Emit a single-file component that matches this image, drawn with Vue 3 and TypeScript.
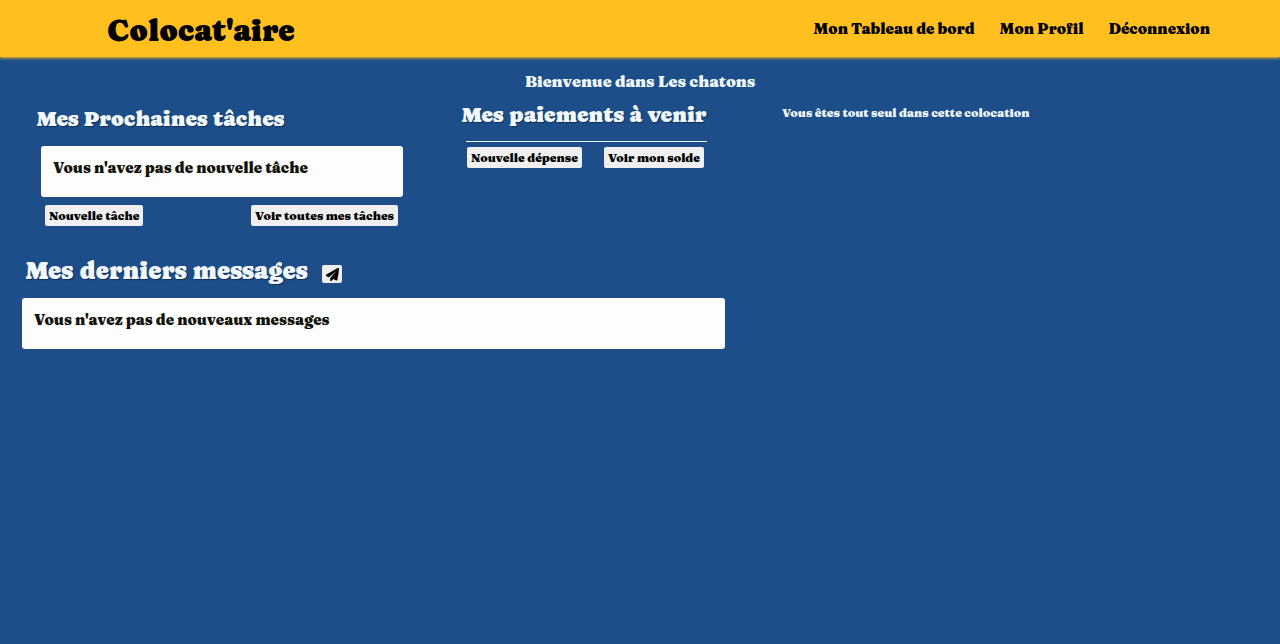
<script setup lang="ts">
const links = [
  { label: 'Mon Tableau de bord', href: '#tableau' },
  { label: 'Mon Profil', href: '#profil' },
  { label: 'Déconnexion', href: '#deconnexion' },
]
</script>

<template>
  <div class="page">
    <header class="bar">
      <a class="brand" href="#accueil">Colocat'aire</a>
      <nav class="nav">
        <a v-for="link in links" :key="link.href" :href="link.href">{{ link.label }}</a>
      </nav>
    </header>
    <main>
      <h1 class="welcome">Bienvenue dans Les chatons</h1>
      <div class="columns">
        <div class="left">
          <div class="top">
            <section class="tasks">
              <h2>Mes Prochaines tâches</h2>
              <div class="card"><p>Vous n'avez pas de nouvelle tâche</p></div>
              <div class="actions">
                <button type="button">Nouvelle tâche</button>
                <button type="button">Voir toutes mes tâches</button>
              </div>
            </section>
            <section class="payments">
              <h2>Mes paiements à venir</h2>
              <div class="rule"></div>
              <div class="actions">
                <button type="button">Nouvelle dépense</button>
                <button type="button">Voir mon solde</button>
              </div>
            </section>
          </div>
          <section class="messages">
            <div class="messages-head">
              <h2>Mes derniers messages</h2>
              <button type="button" class="send" aria-label="Envoyer un message">
                <svg viewBox="0 0 512 512" width="13" height="13" aria-hidden="true">
                  <path fill="currentColor" stroke="currentColor" stroke-width="20" d="M476 3.200L12.500 270.600c-18.100 10.400-15.800 35.600 2.200 43.200L121 358.400l287.300-253.200c5.500-4.900 13.300 2.600 8.600 8.300L176 407v80.500c0 23.600 28.500 32.900 42.500 15.800L282 426l124.600 52.200c14.200 6 30.400-2.900 33-18.200l72-432C515 7.800 493.300-6.800 476 3.200z" />
                </svg>
              </button>
            </div>
            <div class="card"><p>Vous n'avez pas de nouveaux messages</p></div>
          </section>
        </div>
        <aside class="members"><p>Vous êtes tout seul dans cette colocation</p></aside>
      </div>
    </main>
  </div>
</template>

<style>
body {
  margin: 0;
  background: #1d4e89;
}
</style>

<style scoped>
.page {
  color: #f0f8ff;
  font-family: "Fraunces", "DejaVu Serif", serif;
  font-weight: 900;
  font-size: 15px;
}
h1, p {
  margin: 0;
  font-weight: 900;
}
.bar {
  display: flex;
  align-items: center;
  justify-content: space-between;
  height: 57px;
  padding: 0 70px 0 107px;
  background: #ffbf1f;
  box-shadow: 0 1px 3px #ffbf1f;
}
.bar a {
  color: #000;
  text-decoration: none;
}
.bar .brand,
h2 {
  font-family: "Caprasimo", "Fraunces", "DejaVu Serif", serif;
  font-weight: 400;
}
.brand {
  padding-top: 4px;
  font-size: 31px;
}
.nav {
  display: flex;
  gap: 25px;
}
.welcome {
  padding-top: 14px;
  font-size: 16px;
  line-height: 20px;
  text-align: center;
}
.columns {
  display: flex;
  gap: 57px;
  padding: 10px 22px 0;
}
.left {
  flex: 0 0 703px;
}
.top {
  display: flex;
  justify-content: space-between;
}
.tasks {
  width: 366px;
  padding: 4px 0 0 15px;
}
.payments {
  width: 245px;
  margin-right: 18px;
}
h2 {
  margin: 0;
  font-size: 22px;
  line-height: 28px;
  white-space: nowrap;
  text-shadow: 1px 1px 1px rgba(0, 0, 0, 0.4);
}
.card {
  box-sizing: border-box;
  min-height: 51px;
  padding: 12px;
  border-radius: 3px;
  background: #fdfdfd;
  color: #14140c;
  line-height: 20px;
}
.tasks .card {
  margin: 13px 0 8px 4px;
}
.actions {
  display: flex;
  justify-content: space-between;
}
.tasks .actions {
  padding: 0 5px 0 8px;
}
button {
  height: 21px;
  padding: 0 4px;
  border: 0;
  border-radius: 2px;
  background: #efefef;
  color: #000;
  font: inherit;
  font-size: 12px;
  line-height: 21px;
  white-space: nowrap;
}
.rule {
  height: 1px;
  margin: 12px 0 5px 4px;
  background: #f0f8ff;
}
.payments .actions {
  padding: 0 3px 0 5px;
}
.messages {
  margin-top: 29px;
}
.messages-head {
  display: flex;
  gap: 14px;
  padding-left: 4px;
}
.messages h2 {
  font-size: 25px;
  line-height: 32px;
}
.send {
  display: grid;
  place-items: center;
  width: 20px;
  height: 18px;
  margin-top: 10px;
}
.messages .card {
  margin-top: 11px;
}
.members {
  padding-top: 2px;
  font-size: 12px;
  line-height: 20px;
}
</style>
